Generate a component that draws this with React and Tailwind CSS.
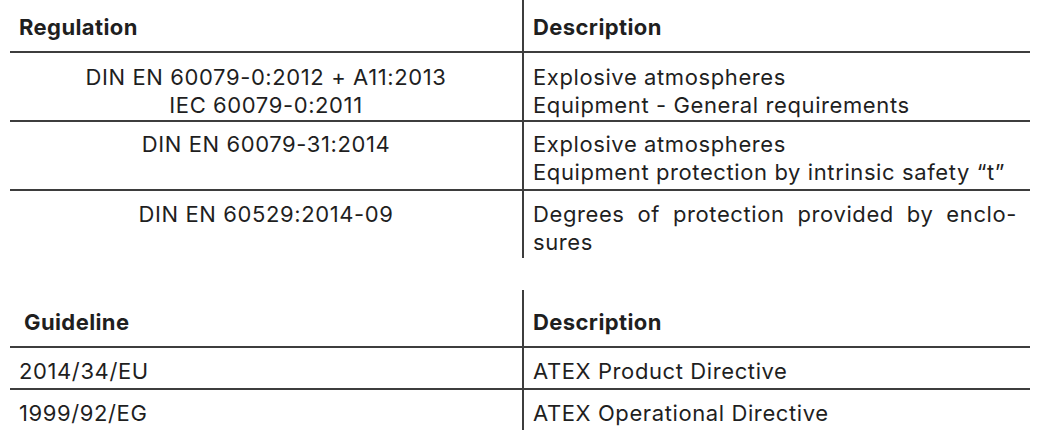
export default function App() {
  const font = { fontFamily: "Inter, 'Noto Sans', 'Liberation Sans', sans-serif" };

  return (
    <div className="min-h-[444px] w-[1045px] bg-white px-[10px] text-[22px] leading-[28px] tracking-[0.6px] text-[#1f1f1f]" style={font}>
      {/* Regulations */}
      <div className="grid w-[1020px] grid-cols-[512px_508px]">
        <div className="h-[53px] border-b-2 border-[#3d3d3d] pl-[9px] pt-[13px] font-bold tracking-[0.4px]">Regulation</div>
        <div className="h-[53px] border-b-2 border-l-2 border-[#3d3d3d] pl-[9px] pt-[13px] font-bold tracking-[0.4px]">Description</div>

        <div className="h-[69px] border-b-2 border-[#3d3d3d] pt-[10px] text-center">
          DIN EN 60079-0:2012 + A11:2013
          <br />
          IEC 60079-0:2011
        </div>
        <div className="h-[69px] border-b-2 border-l-2 border-[#3d3d3d] pl-[9px] pt-[10px]">
          Explosive atmospheres
          <br />
          Equipment - General requirements
        </div>

        <div className="h-[69px] border-b-2 border-[#3d3d3d] pt-[8px] text-center">DIN EN 60079-31:2014</div>
        <div className="h-[69px] border-b-2 border-l-2 border-[#3d3d3d] pl-[9px] pt-[8px]">
          Explosive atmospheres
          <br />
          Equipment protection by intrinsic safety “t”
        </div>

        <div className="h-[67px] pt-[9px] text-center">DIN EN 60529:2014-09</div>
        <div className="h-[67px] border-l-2 border-[#3d3d3d] pl-[9px] pr-[13px] pt-[9px]">
          <div className="text-justify [text-align-last:justify]">Degrees of protection provided by enclo-</div>
          <div>sures</div>
        </div>
      </div>

      {/* Guidelines */}
      <div className="mt-[32px] grid w-[1020px] grid-cols-[512px_508px]">
        <div className="h-[58px] border-b-2 border-[#3d3d3d] pl-[14px] pt-[18px] font-bold tracking-[0.4px]">Guideline</div>
        <div className="h-[58px] border-b-2 border-l-2 border-[#3d3d3d] pl-[9px] pt-[18px] font-bold tracking-[0.4px]">Description</div>

        <div className="h-[42px] border-b-2 border-[#3d3d3d] pl-[9px] pt-[9px]">2014/34/EU</div>
        <div className="h-[42px] border-b-2 border-l-2 border-[#3d3d3d] pl-[9px] pt-[9px]">ATEX Product Directive</div>

        <div className="h-[40px] pl-[9px] pt-[9px]">1999/92/EG</div>
        <div className="h-[40px] border-l-2 border-[#3d3d3d] pl-[9px] pt-[9px]">ATEX Operational Directive</div>
      </div>
    </div>
  );
}
